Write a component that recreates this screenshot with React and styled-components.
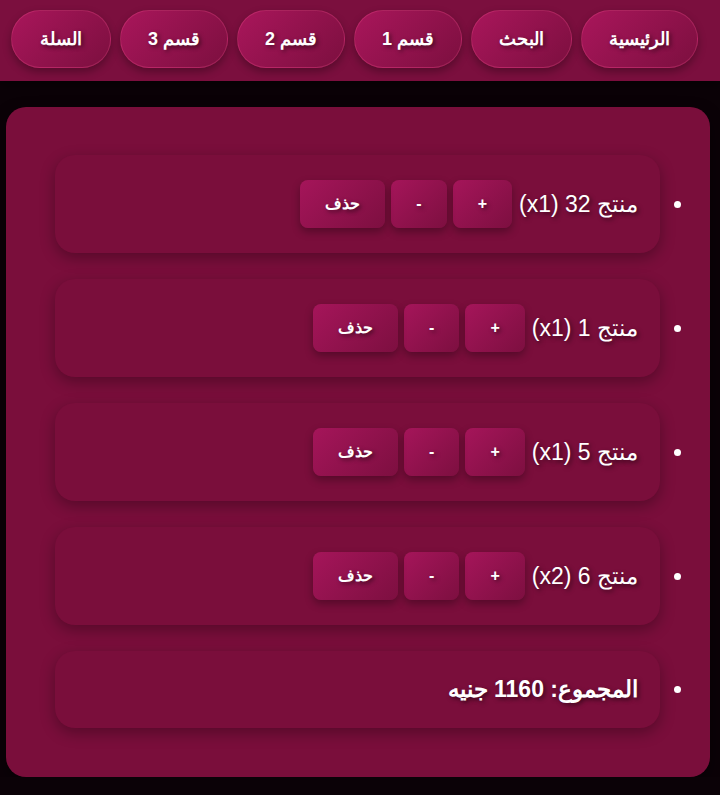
import styled, { createGlobalStyle } from 'styled-components';

/* ──────────────────────────  STYLES  ────────────────────────── */
const GlobalStyle = createGlobalStyle`
  html, body {
    margin: 0;
    background: #0b0207;
    direction: rtl;
    font-family: Arial, "Liberation Sans", sans-serif;
    color: #fff;
  }
`;

const Header = styled.header`
  background-color: #7b0f3e;
  display: flex;
  flex-wrap: nowrap;
  gap: 9px;
  padding: 10px 22px 13px 0;
  box-shadow: 0 4px 10px rgba(0, 0, 0, 0.5);
`;

const NavButton = styled.a`
  flex: none;
  min-width: 100px;
  box-sizing: border-box;
  text-align: center;
  padding: 18px 27px;
  border-radius: 30px;
  border: 1px solid rgba(255, 90, 150, 0.25);
  background: linear-gradient(135deg, #a9165b 0%, #7c0f3f 100%);
  color: #fff;
  font-weight: bold;
  font-size: 18px;
  line-height: 20px;
  text-decoration: none;
  text-shadow: 2px 2px 4px rgba(0, 0, 0, 0.5);
  box-shadow: 0 4px 8px rgba(0, 0, 0, 0.3);
`;

const Main = styled.main`
  margin: 26px 10px 0 6px;
  padding: 48px 0 49px 49px;
  background-color: #7a0e3b;
  border-radius: 20px;
  box-shadow: 0 6px 16px rgba(0, 0, 0, 0.4);
`;

const CartList = styled.ul`
  margin: 0;
  padding: 0 50px 0 0;
`;

const CartItem = styled.li`
  padding: 25px 22px;
  margin-bottom: 26px;
  border-radius: 20px;
  background-color: #7a0e3b;
  box-shadow: 0 5px 15px rgba(0, 0, 0, 0.3);
  font-size: 23px;
  line-height: 27px;
  text-shadow: 2px 2px 4px rgba(0, 0, 0, 0.5);

  &:last-child {
    margin-bottom: 0;
  }
`;

const Row = styled.div`
  display: flex;
  align-items: center;
  gap: 7px;
`;

const Label = styled.span`
  font-weight: ${(p) => (p.$bold ? 'bold' : 'normal')};
`;

const Actions = styled.div`
  display: flex;
  gap: 6px;
`;

const ActionButton = styled.button`
  padding: 15px 25px;
  border: none;
  border-radius: 8px;
  background: linear-gradient(135deg, #a5155a 0%, #7d0f40 100%);
  color: #fff;
  font-family: inherit;
  font-weight: bold;
  font-size: 16px;
  line-height: 18px;
  text-shadow: 2px 2px 4px rgba(0, 0, 0, 0.5);
  box-shadow: 0 4px 8px rgba(0, 0, 0, 0.3);
  cursor: pointer;
`;

/* ──────────────────────────  DATA  ────────────────────────── */
const navLinks = ['الرئيسية', 'البحث', 'قسم 1', 'قسم 2', 'قسم 3', 'السلة'];

const cart = [
  { id: 32, qty: 1 },
  { id: 1, qty: 1 },
  { id: 5, qty: 1 },
  { id: 6, qty: 2 },
];

/* ──────────────────────────  COMPONENT  ────────────────────────── */
const App = () => (
  <>
    <GlobalStyle />
    <Header>
      {navLinks.map((name) => (
        <NavButton href="#" key={name}>{name}</NavButton>
      ))}
    </Header>

    <Main>
      <CartList>
        {cart.map((item) => (
          <CartItem key={item.id}>
            <Row>
              <Label>{`منتج ${item.id} (x${item.qty})`}</Label>
              <Actions>
                <ActionButton>+</ActionButton>
                <ActionButton>-</ActionButton>
                <ActionButton>حذف</ActionButton>
              </Actions>
            </Row>
          </CartItem>
        ))}
        <CartItem>
          <Label $bold>المجموع: 1160 جنيه</Label>
        </CartItem>
      </CartList>
    </Main>
  </>
);

export default App;
